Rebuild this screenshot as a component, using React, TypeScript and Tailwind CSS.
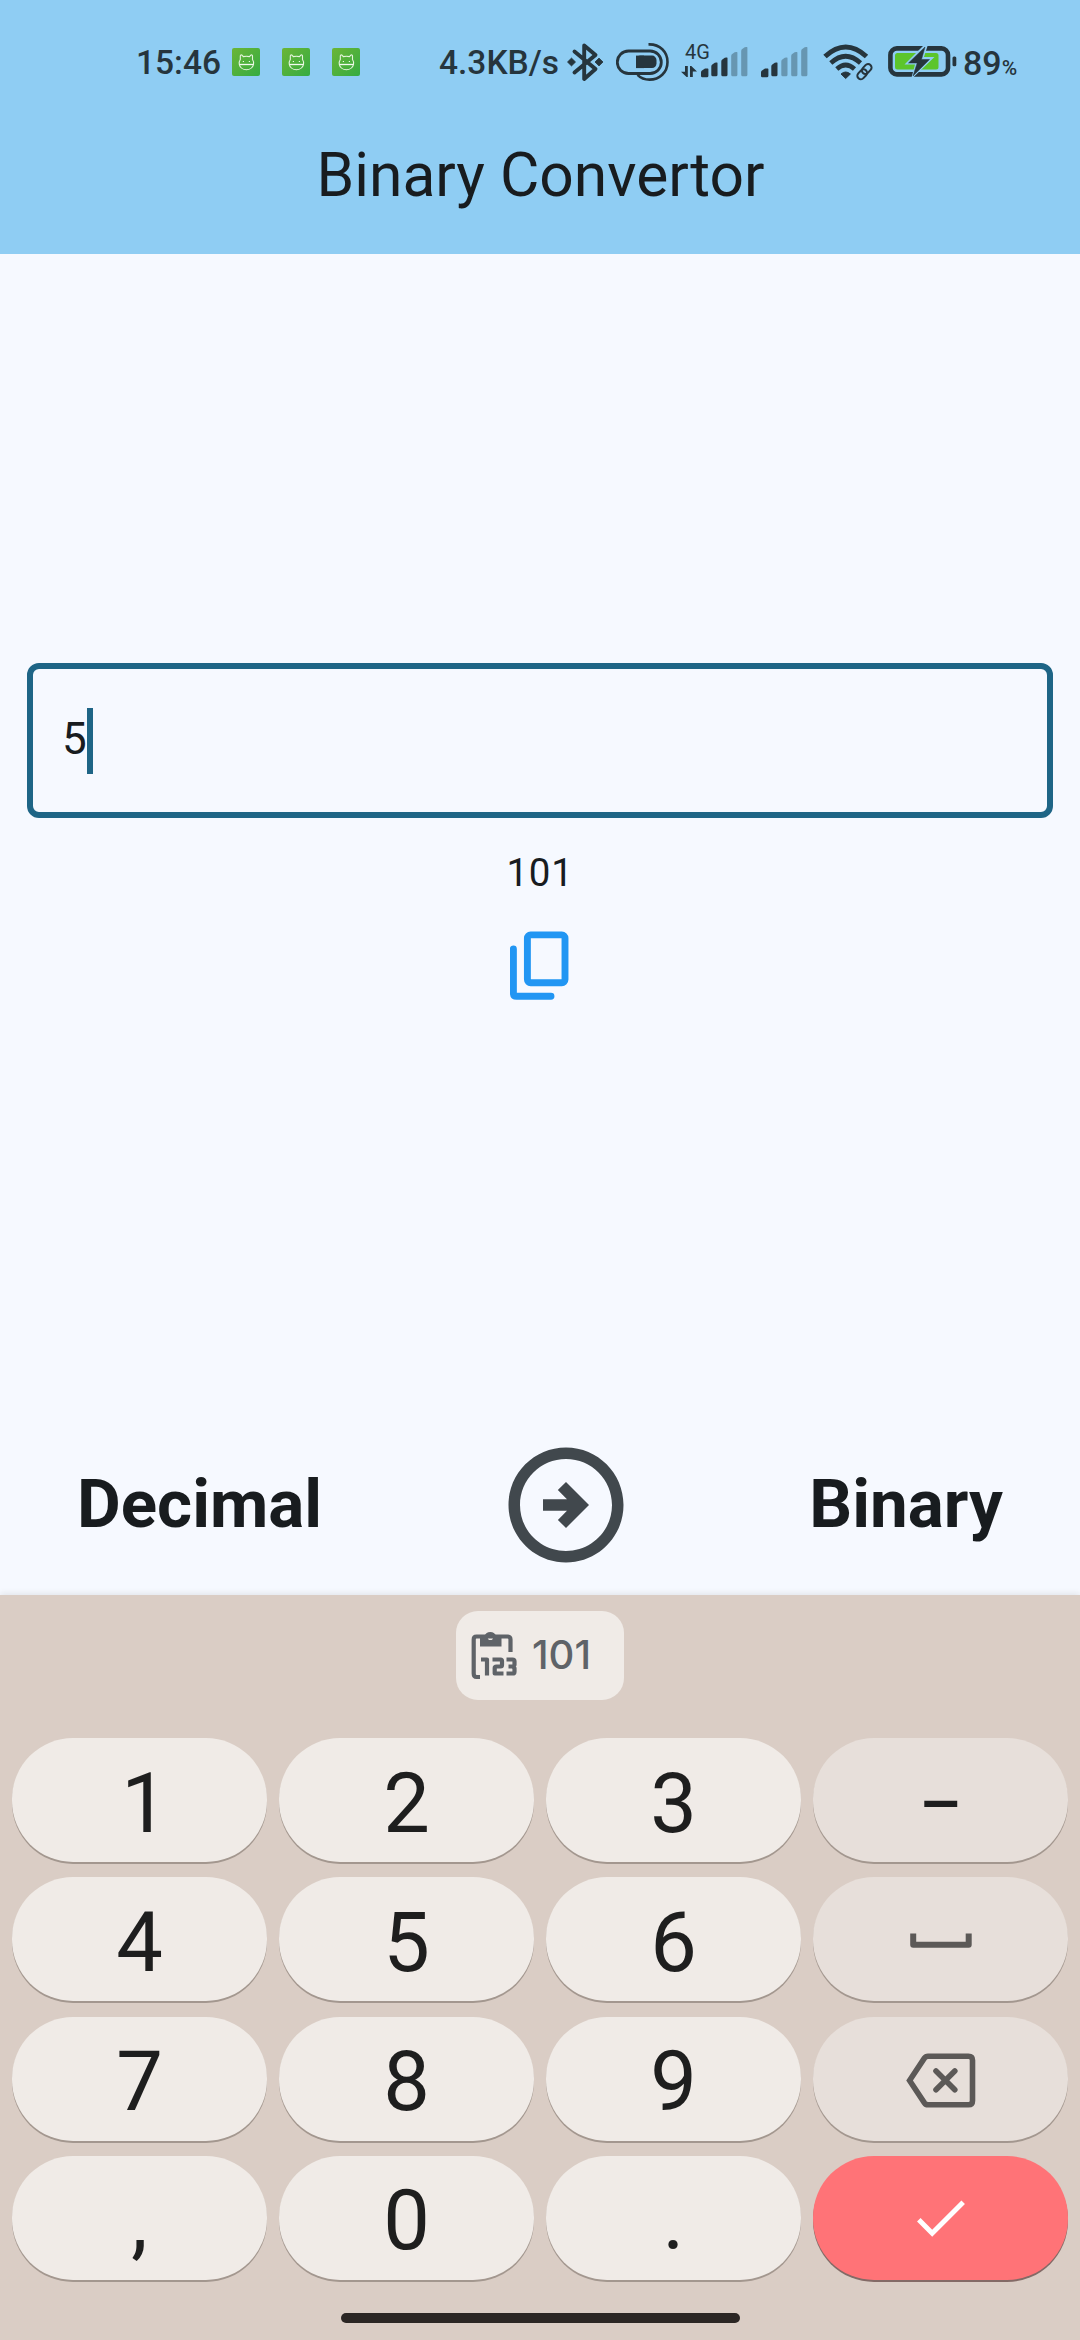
import React from "react";

const INK = "#26353d";

function Droid() {
  return (
    <svg width="28" height="28" viewBox="0 0 28 28" fill="none">
      <defs>
        <linearGradient id="leaf" x1="0" y1="0" x2="1" y2="1">
          <stop offset="0" stopColor="#6bb536" />
          <stop offset="1" stopColor="#35ac42" />
        </linearGradient>
      </defs>
      <rect width="28" height="28" rx="2" fill="url(#leaf)" />
      <path d="M8.300 11.500V8.200q0-1.600 1.500-1.200l1.600 1.600q3-.8 6 0l1.600-1.600q1.500-.4 1.500 1.200v3.300q1.400 2 1 4.800a7.200 6.500 0 0 1-14.200 0q-.4-2.800 1-4.800z" stroke="#e4f4dd" strokeWidth="1.100" />
      <path d="M7.500 16.500h13.800" stroke="#f2fbee" strokeWidth="1.300" />
      <path d="M10.800 13.500h1.200M16.800 13.500h1.200" stroke="#e9f7e4" strokeWidth="1.200" />
    </svg>
  );
}

function Bluetooth() {
  return (
    <svg width="37" height="40" viewBox="0 0 37 40" fill="none">
      <path d="M7.500 9.500L28.500 27L17.200 37V3.500L28.500 13L7.500 30.500" stroke={INK} strokeWidth="3.900" strokeLinejoin="round" strokeLinecap="round" />
      <path d="M0.500 20l4-3.900 4 3.900-4 3.900zM28 20l4-3.900 4 3.900-4 3.900z" fill={INK} stroke={INK} strokeWidth=".8" strokeLinejoin="round" />
    </svg>
  );
}

function ToggleBadge() {
  return (
    <svg width="54" height="40" viewBox="0 0 54 40" fill="none" stroke={INK}>
      <rect x="1.300" y="9" width="44" height="22.500" rx="11.200" strokeWidth="2.800" />
      <rect x="20" y="13.600" width="20.500" height="12.500" rx="4.500" fill={INK} stroke="none" />
      <path d="M20 13.600h8v12.500h-8z" fill={INK} stroke="none" />
      <path d="M32.500 2.400C44 2 51.500 10 51.500 20c0 10.500-8 17.600-18 17.600-5.200 0-9-1.800-12-4.800" strokeWidth="2.600" />
    </svg>
  );
}

const BARS = [
  "M0 29.500v-4.500q0-1 1-1.800l3-2q.5-.2 1.500-.2h1.300q.6 0 .6.800v6.500q0 1.500-1.500 1.500h-4.500q-1.400 0-1.400-1.300z",
  "M10.300 29v-10q0-1 1-1.800l2.500-1.800q.7-.4 1.500-.4h.7q.5 0 .5.800v11.500q0 1.500-1.500 1.500h-3.200q-1.500 0-1.500-1.500z",
  "M20.300 29v-15q0-1 1-1.800l2.500-1.800q.7-.4 1.500-.4h.7q.5 0 .5.800v16.500q0 1.500-1.500 1.500h-3.200q-1.500 0-1.500-1.500z",
  "M30.200 29v-20.500q0-1 1-1.800l2.500-1.800q.7-.4 1.500-.4h.7q.5 0 .5.800v22q0 1.500-1.500 1.500h-3.200q-1.500 0-1.500-1.500z",
  "M40.200 29v-25.500q0-1 1-1.800l2.500-1.800q.7-.4 1.500-.4h.7q.5 0 .5.800v27q0 1.500-1.500 1.500h-3.200q-1.500 0-1.500-1.500z",
];

function Signal({ level }: { level: number }) {
  return (
    <svg width="48" height="32" viewBox="0 -1.400 48 32">
      {BARS.map((d, i) => (
        <path key={i} d={d} fill={i < level ? INK : "#6796b1"} />
      ))}
    </svg>
  );
}

function Updown() {
  return (
    <svg width="16" height="12" viewBox="0 0 16 12" fill={INK}>
      <path d="M4 0h2.800v11H5.600L0 5.800h4zM9 0h1.300L16 5.500h-4.200V11H9z" />
    </svg>
  );
}

function Wifi() {
  return (
    <svg width="51" height="37" viewBox="0 0 51 37" fill="none" stroke={INK}>
      <path d="M2 12.500Q22.700-6.500 43.500 12.500" strokeWidth="5" />
      <path d="M7.800 19Q22.700 5.500 37.500 19" strokeWidth="4.600" />
      <path d="M13.800 25Q22.700 17 31.500 25" strokeWidth="4.600" />
      <path d="M18 30q4.700-4 9.400 0L22.700 34.500z" fill={INK} strokeWidth="1" />
      <rect x="-5.500" y="-3.500" width="11" height="7" rx="3.500" strokeWidth="2" transform="translate(43.700 25) rotate(-47)" />
      <rect x="-5.500" y="-3.500" width="11" height="7" rx="3.500" strokeWidth="2" transform="translate(39.200 30.300) rotate(-47)" />
    </svg>
  );
}

function Battery() {
  return (
    <svg width="69" height="32" viewBox="0 0 69 32">
      <rect x="2.400" y="2.400" width="57.600" height="26" rx="6.500" fill="none" stroke={INK} strokeWidth="4.600" />
      <rect x="7" y="7" width="43.500" height="16.500" rx="2.500" fill="#5cc52b" />
      <rect x="64.500" y="10.500" width="3.800" height="9.800" rx="1.500" fill={INK} />
      <path d="M36.500 -1.500L16.500 18.500H27L23 33.500L46.500 11H36L40 -1.500z" fill="#8fcdf3" />
      <path d="M37 1L20.500 17h8.700L25 30L41.500 13.500H33.500z" fill={INK} stroke={INK} strokeWidth=".5" />
    </svg>
  );
}

function CopyIcon() {
  return (
    <svg width="60" height="70" viewBox="0 0 60 70" fill="none" stroke="#2196f3" strokeWidth="6.900">
      <rect x="17.400" y="3.900" width="37.600" height="47.800" rx="3.200" />
      <path d="M3.400 17.900V62.100q0 3.200 3.200 3.200H41" strokeLinecap="round" />
    </svg>
  );
}

function ArrowCircle() {
  return (
    <svg width="138" height="138" viewBox="0 0 24 24" fill="#41484d">
      <path d="M22 12c0-5.520-4.480-10-10-10S2 6.480 2 12s4.480 10 10 10 10-4.480 10-10zM4 12c0-4.420 3.580-8 8-8s8 3.580 8 8-3.580 8-8 8-8-3.580-8-8zm12 0-4 4-1.410-1.410L12.170 13H8v-2h4.170l-1.590-1.590L12 8l4 4z" />
    </svg>
  );
}

function ClipboardIcon() {
  return (
    <svg width="47" height="49" viewBox="0 0 47 49" fill="none" stroke="#5f6368">
      <path d="M9 46H5.500Q2.700 46 2.700 42.500V8.500Q2.700 5.500 5.500 5.500H36.500Q39.500 5.500 39.500 8.500V21" strokeWidth="4.200" />
      <path fillRule="evenodd" d="M9 5h4.500a6.200 6.200 0 0 1 11.600 0H30.500v10.500H9zM16.800 6.500a2.600 2.600 0 1 0 5.200 0 2.600 2.600 0 1 0-5.200 0z" fill="#5f6368" stroke="none" />
      <g strokeWidth="4.200" strokeLinejoin="round">
        <path d="M10 28.500h6V44.500" />
        <path d="M21.500 28.500h8q1.500 0 1.500 1.500v4q0 1.500-1.500 1.500h-4q-1.800 0-1.800 1.500v5.500h8.800" />
        <path d="M35.500 28.500h6q2 0 2 1.800v3.500l-1.500 1.700 1.500 1.700v3.500q0 1.800-2 1.800h-6M37.500 35.500h4.500" />
      </g>
    </svg>
  );
}

function SpaceIcon() {
  return (
    <svg width="62" height="17" viewBox="0 0 62 17" fill="none">
      <path d="M3.200 2.500v11.200h55.500V2.500" stroke="#5c5957" strokeWidth="6" strokeLinejoin="round" />
    </svg>
  );
}

function BackspaceIcon() {
  return (
    <svg width="70" height="55" viewBox="0 0 70 55" fill="none" stroke="#5c5957" strokeWidth="5.600">
      <path d="M22 3.200H62.500q4 0 4 4V47.800q0 4-4 4H22q-2.200 0-3.600-2L3.600 27.500L18.400 5.200Q19.800 3.200 22 3.200z" />
      <path d="M30 18l18.800 18.800M48.800 18L30 36.800" strokeLinecap="round" />
    </svg>
  );
}

function CheckIcon() {
  return (
    <svg width="48" height="37" viewBox="0 0 48 37" fill="none">
      <path d="M1.800 19.800L15.200 33.200L46.200 2.200" stroke="#fff" strokeWidth="5" />
    </svg>
  );
}

function Key({ children, tone = "light" }: { children: React.ReactNode; tone?: "light" | "dim" | "accent" }) {
  const tones = {
    light: "bg-[#f0ebe7] shadow-[0_2px_0_#a3978f]",
    dim: "bg-[#e7dfda] shadow-[0_2px_0_#a3978f]",
    accent: "bg-[#ff7377] shadow-[0_2px_0_#836a66]",
  };
  return (
    <button className={"flex h-[124px] items-center justify-center rounded-[61px] text-[83px] leading-none text-[#1e1e1e] " + tones[tone]}>
      {children}
    </button>
  );
}

function Digit({ children }: { children: string }) {
  return <span className="pt-1.5">{children}</span>;
}

export default function App() {
  return (
    <div className="flex h-[2340px] w-[1080px] flex-col overflow-hidden bg-[#f6f9ff] font-['Roboto',sans-serif] text-[#181c1f]">
      <header className="h-[254px] bg-[#8fcdf3]">
        <div className="flex h-[124px] items-center pl-[136px] text-[33.500px] font-medium text-[#26353d]">
          <span className="w-24 pt-0.5 leading-none">15:46</span>
          <div className="flex gap-[22px]">
            <Droid />
            <Droid />
            <Droid />
          </div>
          <span className="ml-[79px] w-[128px] pt-0.5 leading-none">4.3KB/s</span>
          <Bluetooth />
          <span className="ml-3"><ToggleBadge /></span>
          <div className="ml-[11px] flex w-5 flex-col items-start gap-1 pb-1">
            <span className="ml-1 text-[20px] leading-5 font-normal">4G</span>
            <Updown />
          </div>
          <Signal level={3} />
          <span className="ml-3"><Signal level={2} /></span>
          <span className="ml-3.5"><Wifi /></span>
          <span className="ml-3.5"><Battery /></span>
          <span className="ml-1.5 pt-0.5 text-[34px] leading-none">89<span className="text-[21px]">%</span></span>
        </div>
        <h1 className="pt-4 pl-px text-center text-[60.500px] leading-[72px]">Binary Convertor</h1>
      </header>

      <main className="flex h-[1341px] flex-col items-center">
        <div className="mt-[409px] flex h-[155px] w-[1026px] items-center rounded-[12px] border-[6px] border-[#1e6586] pl-[29px] text-[44px]">
          <span className="pb-[3px]">5</span>
          <span className="h-[66px] w-[6px] bg-[#1e6586]" />
        </div>
        <p className="mt-8 text-[38.500px] leading-[46px] tracking-[0.700px]">101</p>
        <div className="mt-[35px]"><CopyIcon /></div>
        <div className="mt-auto mb-[21px] flex w-full items-center justify-between px-[77px] text-[67.300px] font-bold">
          <span className="pb-0.5">Decimal</span>
          <ArrowCircle />
          <span className="pb-0.5">Binary</span>
        </div>
      </main>

      <section className="flex flex-1 flex-col items-center bg-[#dacdc5] shadow-[0_-2px_6px_rgba(0,0,0,0.080)]">
        <div className="mt-4 flex h-[89px] w-[168px] items-center rounded-[22px] bg-[#f0ebe7] pl-[15px] font-['Inter',sans-serif] text-[40px] font-medium text-[#5f6368]">
          <ClipboardIcon />
          <span className="ml-3.5 pb-0.5 leading-none">101</span>
        </div>
        <div className="mt-[38px] grid w-full grid-cols-4 gap-x-3 gap-y-[15.300px] px-3">
          <Key><span className="pt-1.5 pl-2.5">1</span></Key>
          <Key><Digit>2</Digit></Key>
          <Key><Digit>3</Digit></Key>
          <Key tone="dim"><span className="pt-[9px] text-[66px] font-medium">–</span></Key>
          <Key><Digit>4</Digit></Key>
          <Key><Digit>5</Digit></Key>
          <Key><Digit>6</Digit></Key>
          <Key tone="dim"><SpaceIcon /></Key>
          <Key><Digit>7</Digit></Key>
          <Key><Digit>8</Digit></Key>
          <Key><Digit>9</Digit></Key>
          <Key tone="dim"><span className="pt-1"><BackspaceIcon /></span></Key>
          <Key><Digit>,</Digit></Key>
          <Key><Digit>0</Digit></Key>
          <Key><Digit>.</Digit></Key>
          <Key tone="accent"><span className="pt-0.5"><CheckIcon /></span></Key>
        </div>
        <div className="mt-[33px] h-2.5 w-[399px] rounded-full bg-[#2b2624]" />
      </section>
    </div>
  );
}
